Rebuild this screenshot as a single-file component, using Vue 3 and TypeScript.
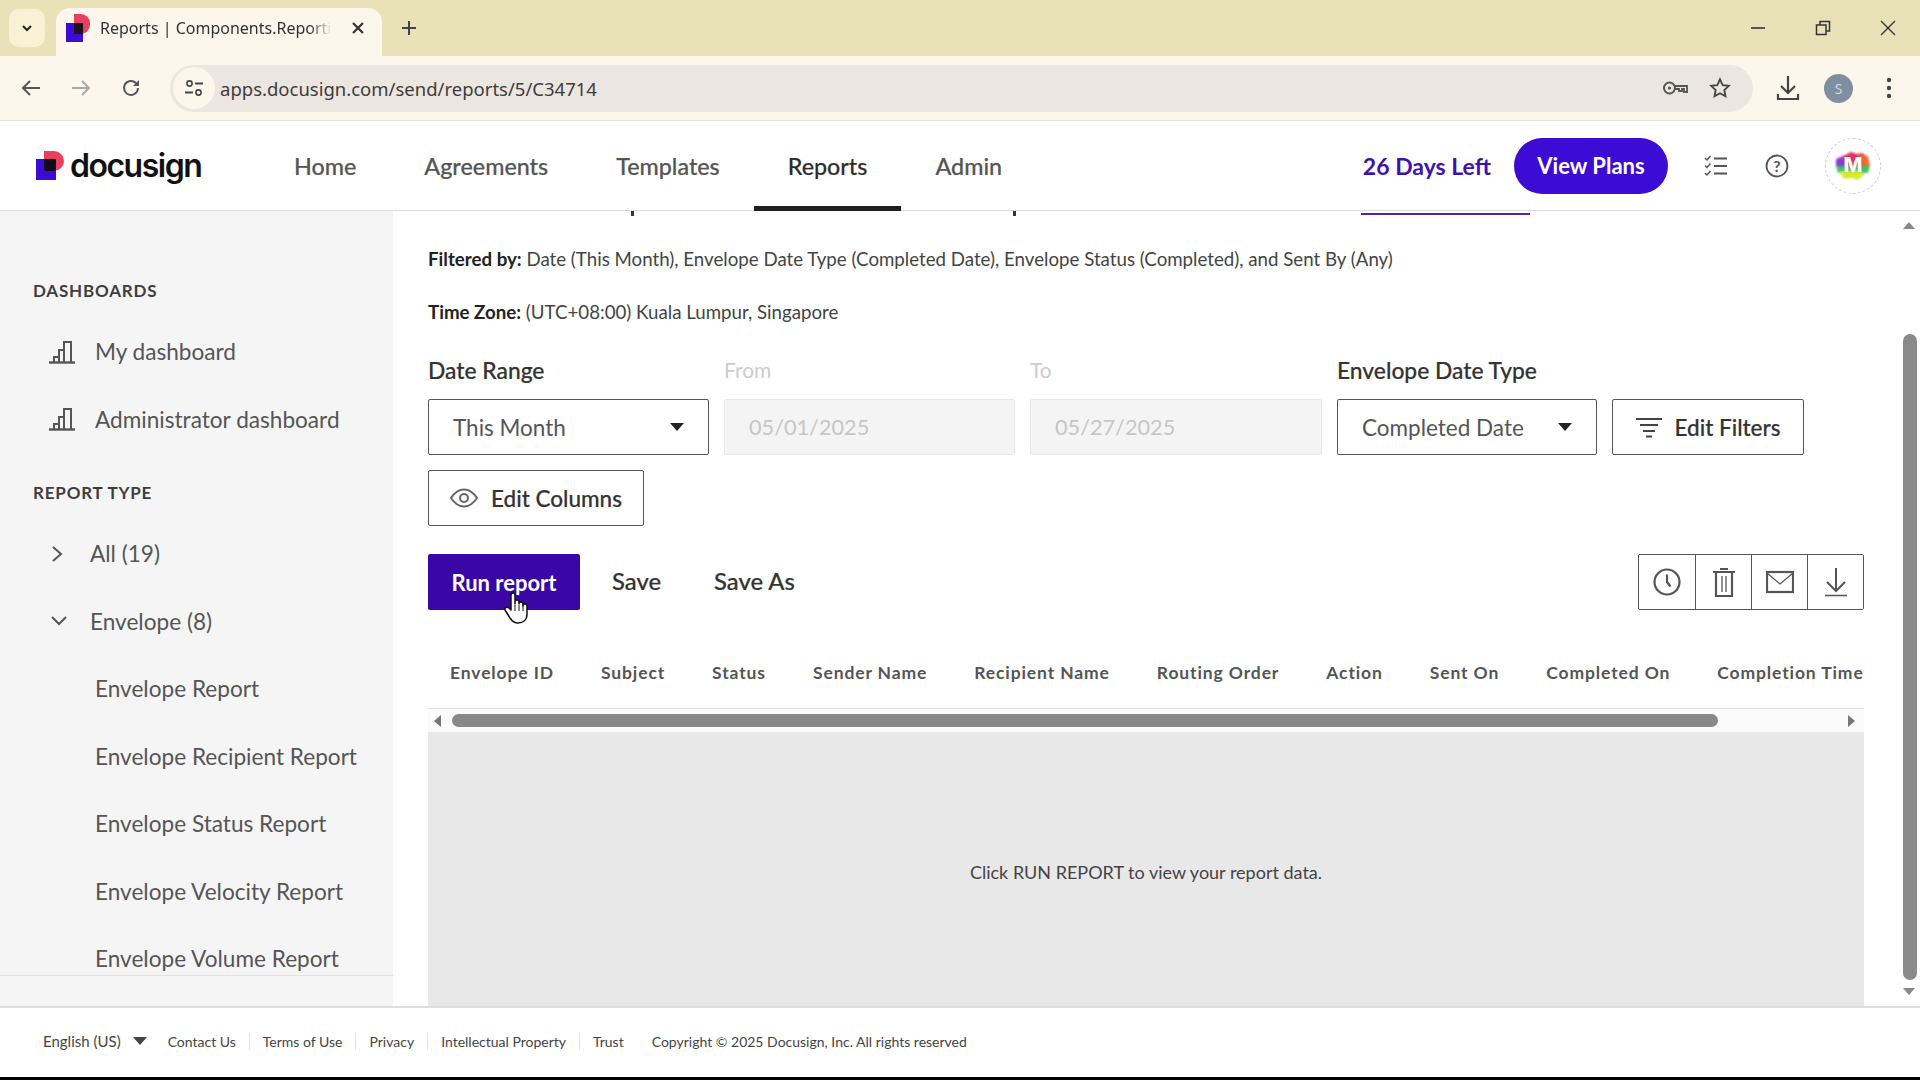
<template>
  <div class="page">
    <div class="tabstrip">
      <button class="tablist">
        <svg width="14" height="14" viewBox="0 0 14 14"><path d="M3 5l4 4 4-4" fill="none" stroke="#222" stroke-width="2" /></svg>
      </button>
      <div class="tab">
        <svg class="favicon" width="24" height="28" viewBox="0 0 24 28">
          <path d="M8 0h7a9 9 0 0 1 9 9v2a9 9 0 0 1-9 9H8z" fill="#e8405f" />
          <rect x="0" y="9" width="17" height="19" fill="#3d0cd4" />
          <rect x="8" y="9" width="9" height="11" fill="#1b1022" />
        </svg>
        <span class="tab-title">Reports | Components.Reporting</span>
        <svg class="tab-x" width="14" height="14" viewBox="0 0 14 14"><path d="M2 2l10 10M12 2L2 12" stroke="#333" stroke-width="2.2" /></svg>
      </div>
      <svg class="newtab" width="16" height="16" viewBox="0 0 16 16"><path d="M8 1v14M1 8h14" stroke="#444" stroke-width="2" /></svg>
      <div class="winctl">
        <svg width="16" height="16" viewBox="0 0 16 16"><path d="M1 8h14" stroke="#333" stroke-width="1.6" /></svg>
        <svg width="16" height="16" viewBox="0 0 16 16"><path d="M1.500 5h9.500v9.500H1.500zM5 5V1.500h9.500V11H11" fill="none" stroke="#333" stroke-width="1.500" /></svg>
        <svg width="16" height="16" viewBox="0 0 16 16"><path d="M1 1l14 14M15 1L1 15" stroke="#333" stroke-width="1.400" /></svg>
      </div>
    </div>

    <div class="toolbar">
      <svg class="tb-back" width="20" height="18" viewBox="0 0 20 18"><path d="M19 9H2M9 2L2 9l7 7" fill="none" stroke="#555" stroke-width="2" /></svg>
      <svg class="tb-fwd" width="20" height="18" viewBox="0 0 20 18"><path d="M1 9h17M11 2l7 7-7 7" fill="none" stroke="#aaa" stroke-width="2" /></svg>
      <svg class="tb-reload" width="20" height="20" viewBox="0 0 20 20"><path d="M17 10a7 7 0 1 1-2-5l2 2" fill="none" stroke="#555" stroke-width="2" /><path d="M18 2v6h-6z" fill="#555" /></svg>
      <div class="omnibox">
        <span class="site-icon">
          <svg width="20" height="20" viewBox="0 0 20 20">
            <circle cx="5.500" cy="5.500" r="2.600" fill="none" stroke="#444" stroke-width="1.600" />
            <path d="M11 5.500h8M1 14.500h8" stroke="#444" stroke-width="1.800" />
            <circle cx="14.500" cy="14.500" r="2.600" fill="none" stroke="#444" stroke-width="1.600" />
          </svg>
        </span>
        <span class="url">apps.docusign.com/send/reports/5/C34714</span>
        <svg class="key" width="26" height="16" viewBox="0 0 26 16">
          <circle cx="7.500" cy="8" r="5.500" fill="none" stroke="#555" stroke-width="2" />
          <circle cx="7.500" cy="8" r="1.600" fill="#555" />
          <path d="M13 6h12v6h-3V9h-2v2h-3V9h-4" fill="none" stroke="#555" stroke-width="1.800" />
        </svg>
        <svg class="star" width="22" height="22" viewBox="0 0 24 24"><path d="M12 2.500l2.900 6.300 6.800.8-5 4.700 1.300 6.800-6-3.400-6 3.400 1.300-6.800-5-4.700 6.800-.8z" fill="none" stroke="#444" stroke-width="2" /></svg>
      </div>
      <svg class="tb-dl" width="24" height="26" viewBox="0 0 24 26"><path d="M12 1v16M5 11l7 7 7-7" fill="none" stroke="#444" stroke-width="2.200" /><path d="M2 19v5h20v-5" fill="none" stroke="#444" stroke-width="2.200" /></svg>
      <span class="profile">S</span>
      <svg class="tb-menu" width="6" height="22" viewBox="0 0 6 22"><circle cx="3" cy="3" r="2.200" fill="#444" /><circle cx="3" cy="11" r="2.200" fill="#444" /><circle cx="3" cy="19" r="2.200" fill="#444" /></svg>
    </div>

    <header class="nav">
      <div class="logo">
        <svg width="28" height="29" viewBox="0 0 28 29">
          <path d="M8 0h10a10 10 0 0 1 0 20H8z" fill="#e8405f" />
          <rect x="0" y="8" width="20" height="21" fill="#3d0cd4" />
          <rect x="8" y="8" width="12" height="12" rx="2" fill="#120c1a" />
        </svg>
        <span class="logo-text">docusign</span>
      </div>
      <nav class="nav-links">
        <a v-for="link in navLinks" :key="link" class="nav-link" :class="{ active: link === 'Reports' }">{{ link }}</a>
      </nav>
      <span class="days">26 Days Left</span>
      <button class="plans">View Plans</button>
      <svg class="nav-check" width="24" height="24" viewBox="0 0 24 24" fill="none" stroke="#555" stroke-width="1.800">
        <path d="M10 4.500h13M10 12h13M10 19.500h13" />
        <path d="M1 4l2 2 3.500-4M1 11.500l2 2 3.500-4M1 19l2 2 3.500-4" stroke-width="1.500" />
      </svg>
      <svg class="nav-help" width="24" height="24" viewBox="0 0 24 24">
        <circle cx="12" cy="12" r="10.500" fill="none" stroke="#555" stroke-width="1.800" />
        <text x="12" y="17.500" text-anchor="middle" class="help-mark">?</text>
      </svg>
      <div class="avatar">
        <svg class="blot" width="34" height="30" viewBox="0 0 34 30">
          <path d="M9 4l6-3 6 2 5-1 6 4 1 9H0l2-8z" fill="#e2305f" />
          <path d="M22 3l10 3 2 9h-8z" fill="#ee6b2e" />
          <path d="M0 8l9-2v10H0z" fill="#8d3ad6" />
          <path d="M0 15h34l-2 7H2z" fill="#3bc26c" />
          <path d="M3 20h22l3 3-6 6-6-2-8 1z" fill="#d5ea2f" />
        </svg>
        <span class="avatar-m">M</span>
      </div>
    </header>

    <div class="body">
      <aside class="sidebar">
        <div class="side-scroll">
          <div class="side-head">DASHBOARDS</div>
          <a v-for="d in dashboards" :key="d" class="side-item dash">
            <svg width="26" height="24" viewBox="0 0 26 24" fill="none" stroke="#555" stroke-width="2.400">
              <path d="M0 22.500h26" />
              <path d="M5 22v-5h5v5M10 22V10h5v12M15 22V2h7v20" stroke-width="2" />
            </svg>
            <span>{{ d }}</span>
          </a>
          <div class="side-head second">REPORT TYPE</div>
          <a class="side-item group">
            <svg width="14" height="18" viewBox="0 0 14 18"><path d="M3 2l8 7-8 7" fill="none" stroke="#555" stroke-width="2" /></svg>
            <span>All (19)</span>
          </a>
          <a class="side-item group">
            <svg width="18" height="12" viewBox="0 0 18 12"><path d="M2 2l7 7 7-7" fill="none" stroke="#555" stroke-width="2" /></svg>
            <span>Envelope (8)</span>
          </a>
          <a v-for="r in envelopeReports" :key="r" class="side-item sub">{{ r }}</a>
        </div>
        <div class="side-end"></div>
      </aside>

      <main class="main">
        <div class="peek">
          <i class="peek-dot first"></i>
          <i class="peek-dot second"></i>
          <i class="peek-line"></i>
        </div>
        <p class="meta"><b>Filtered by:</b> Date (This Month), Envelope Date Type (Completed Date), Envelope Status (Completed), and Sent By (Any)</p>
        <p class="meta zone"><b>Time Zone:</b> (UTC+08:00) Kuala Lumpur, Singapore</p>

        <div class="filters">
          <div class="field w-range">
            <label>Date Range</label>
            <div class="control select">
              <span>This Month</span>
              <i class="caret"></i>
            </div>
          </div>
          <div class="field w-from">
            <label class="off">From</label>
            <div class="control disabled">05/01/2025</div>
          </div>
          <div class="field w-to">
            <label class="off">To</label>
            <div class="control disabled">05/27/2025</div>
          </div>
          <div class="field w-type">
            <label>Envelope Date Type</label>
            <div class="control select">
              <span>Completed Date</span>
              <i class="caret"></i>
            </div>
          </div>
          <button class="outline w-filters">
            <svg width="26" height="22" viewBox="0 0 26 22" fill="none" stroke="#444" stroke-width="2">
              <path d="M0 3h26M4 9h18M7 15h12M10 20.500h6" />
            </svg>
            Edit Filters
          </button>
          <button class="outline w-cols">
            <svg width="28" height="20" viewBox="0 0 28 20" fill="none" stroke="#666" stroke-width="2">
              <path d="M1 10c4-6 8-8.500 13-8.500S23 4 27 10c-4 6-8 8.500-13 8.500S5 16 1 10z" />
              <circle cx="14" cy="10" r="4" />
            </svg>
            Edit Columns
          </button>
        </div>

        <div class="actions">
          <button class="run">
            Run report
            <svg class="hand" width="26" height="34" viewBox="0 0 26 34">
              <path d="M8 19V4a2 2 0 0 1 4 0v9l0-2a2 2 0 0 1 4 0v2a2 2 0 0 1 4 0v2a2 2 0 0 1 4 0v8c0 6-4 9-9 9-4 0-6-2-8-5l-5-8c-1-2 2-4 4-2z" fill="#fff" stroke="#111" stroke-width="1.500" stroke-linejoin="round" />
              <path d="M12 14v6M16 14v6M20 15v5" stroke="#111" stroke-width="1" />
            </svg>
          </button>
          <a class="plain save">Save</a>
          <a class="plain save-as">Save As</a>
          <div class="icon-group">
            <button>
              <svg width="28" height="28" viewBox="0 0 28 28" fill="none" stroke="#555" stroke-width="2.200">
                <circle cx="14" cy="14" r="12.500" /><path d="M14 6.500V14l3.500 4.500" />
              </svg>
            </button>
            <button>
              <svg width="24" height="30" viewBox="0 0 24 30" fill="none" stroke="#555" stroke-width="2.200">
                <path d="M1 5h22M8 2h8M4 5v24h16V5" /><path d="M10 9v16M14 9v16" stroke-width="1.300" />
              </svg>
            </button>
            <button>
              <svg width="28" height="24" viewBox="0 0 28 24" fill="none" stroke="#555" stroke-width="2.200">
                <rect x="1" y="2" width="26" height="20" /><path d="M1 3l13 11L27 3" stroke-width="1.300" />
              </svg>
            </button>
            <button>
              <svg width="24" height="30" viewBox="0 0 24 30" fill="none" stroke="#555" stroke-width="2">
                <path d="M12 1v23M3 15l9 9 9-9" /><path d="M1 28.500h22" stroke-width="1.500" />
              </svg>
            </button>
          </div>
        </div>

        <div class="thead">
          <span v-for="c in columns" :key="c">{{ c }}</span>
        </div>
        <div class="hscroll">
          <i class="arrow left"></i>
          <i class="thumb"></i>
          <i class="arrow right"></i>
        </div>
        <div class="empty">Click RUN REPORT to view your report data.</div>

        <div class="vscroll">
          <i class="v-arrow up"></i>
          <i class="v-thumb"></i>
          <i class="v-arrow down"></i>
        </div>
      </main>
    </div>

    <footer class="footer">
      <span class="lang">English (US)<i class="foot-caret"></i></span>
      <a v-for="f in footerLinks" :key="f" class="foot-link">{{ f }}</a>
      <span class="copy">Copyright © 2025 Docusign, Inc. All rights reserved</span>
    </footer>
    <div class="blackbar"></div>
  </div>
</template>

<script setup lang="ts">
const navLinks = ['Home', 'Agreements', 'Templates', 'Reports', 'Admin'];
const dashboards = ['My dashboard', 'Administrator dashboard'];
const envelopeReports = [
  'Envelope Report',
  'Envelope Recipient Report',
  'Envelope Status Report',
  'Envelope Velocity Report',
  'Envelope Volume Report',
];
const columns = [
  'Envelope ID',
  'Subject',
  'Status',
  'Sender Name',
  'Recipient Name',
  'Routing Order',
  'Action',
  'Sent On',
  'Completed On',
  'Completion Time',
];
const footerLinks = ['Contact Us', 'Terms of Use', 'Privacy', 'Intellectual Property', 'Trust'];
</script>

<style>
html,
body {
  margin: 0;
  background: #fff;
}
</style>

<style scoped>
.page {
  width: 1920px;
  height: 1080px;
  overflow: hidden;
  display: flex;
  flex-direction: column;
  font-family: Lato, "Noto Sans", sans-serif;
  color: #333;
}
button {
  font-family: inherit;
  cursor: pointer;
}

/* browser chrome */
.tabstrip {
  height: 56px;
  flex: none;
  display: flex;
  align-items: flex-end;
  background: #e9e2b9;
}
.tablist {
  width: 36px;
  height: 38px;
  margin: 0 11px 9px 9px;
  border: 0;
  border-radius: 10px;
  background: #f8f1d3;
  display: flex;
  align-items: center;
  justify-content: center;
}
.tab {
  width: 326px;
  height: 48px;
  border-radius: 14px 14px 0 0;
  background: #fcf6ec;
  display: flex;
  align-items: center;
  padding: 0 0 8px 10px;
  box-sizing: border-box;
}
.favicon {
  flex: none;
  margin-right: 10px;
}
.tab-title {
  width: 232px;
  font: 16px "Noto Sans", sans-serif;
  color: #333;
  white-space: nowrap;
  overflow: hidden;
  -webkit-mask-image: linear-gradient(90deg, #000 90%, transparent);
  mask-image: linear-gradient(90deg, #000 90%, transparent);
}
.tab-x {
  margin-left: 19px;
}
.newtab {
  margin: 0 0 20px 19px;
}
.winctl {
  margin-left: auto;
  margin-right: 24px;
  display: flex;
  gap: 49px;
  padding-bottom: 20px;
}

.toolbar {
  height: 65px;
  flex: none;
  display: flex;
  align-items: center;
  background: #fcf6ec;
  border-bottom: 1px solid #e8e3da;
  box-sizing: border-box;
}
.tb-back {
  margin-left: 21px;
}
.tb-fwd {
  margin-left: 30px;
}
.tb-reload {
  margin-left: 30px;
}
.omnibox {
  margin-left: 29px;
  width: 1583px;
  height: 47px;
  border-radius: 24px;
  background: #ece6e0;
  display: flex;
  align-items: center;
}
.site-icon {
  width: 42px;
  height: 42px;
  margin-left: 3px;
  border-radius: 50%;
  background: #fcf6ec;
  display: flex;
  align-items: center;
  justify-content: center;
}
.url {
  margin-left: 5px;
  font: 18.500px "Noto Sans", sans-serif;
  color: #3c3c3c;
}
.key {
  margin-left: auto;
}
.star {
  margin: 0 22px 0 21px;
}
.tb-dl {
  margin-left: 23px;
}
.profile {
  margin-left: 24px;
  width: 29px;
  height: 29px;
  border-radius: 50%;
  background: #7f8ea0;
  color: #ccd6e0;
  font: 14px "Noto Sans", sans-serif;
  display: flex;
  align-items: center;
  justify-content: center;
}
.tb-menu {
  margin-left: 33px;
}

/* app nav */
.nav {
  height: 90px;
  flex: none;
  box-sizing: border-box;
  display: flex;
  align-items: center;
  background: #fff;
  border-bottom: 1px solid #dcdbe0;
  position: relative;
  z-index: 2;
}
.logo {
  width: 260px;
  padding-left: 36px;
  box-sizing: border-box;
  display: flex;
  align-items: center;
  gap: 6px;
}
.logo-text {
  font: 600 32px Inter, sans-serif;
  letter-spacing: -1.500px;
  color: #111;
}
.nav-links {
  display: flex;
  align-self: stretch;
}
.nav-link {
  padding: 0 34px;
  display: flex;
  align-items: center;
  font-size: 23.300px;
  font-weight: 500;
  color: #555;
  -webkit-text-stroke: 0.2px #555;
  border-bottom: 5px solid transparent;
  border-top: 5px solid transparent;
  margin-bottom: -1px;
}
.nav-link.active {
  color: #2b2b2b;
  border-bottom-color: #1f1f1f;
}
.days {
  margin-left: auto;
  font-size: 23px;
  font-weight: 700;
  color: #3d12b5;
}
.plans {
  margin-left: 23px;
  width: 154px;
  height: 56px;
  border: 0;
  border-radius: 28px;
  background: #3d0cd4;
  color: #fff;
  font-size: 22px;
  font-weight: 700;
}
.nav-check {
  margin-left: 36px;
}
.nav-help {
  margin-left: 37px;
}
.help-mark {
  font: 700 16px Lato, sans-serif;
  fill: #555;
}
.avatar {
  margin: 0 39px 0 36px;
  width: 56px;
  height: 56px;
  box-sizing: border-box;
  border-radius: 50%;
  border: 1px dashed #ccc;
  display: flex;
  align-items: center;
  justify-content: center;
  position: relative;
}
.blot {
  filter: blur(0.8px);
}
.avatar-m {
  position: absolute;
  left: 0;
  right: 0;
  top: 14px;
  text-align: center;
  font: 800 20px Inter, sans-serif;
  color: #fff;
}

/* layout */
.body {
  flex: 1;
  min-height: 0;
  display: flex;
}
.sidebar {
  width: 393px;
  flex: none;
  display: flex;
  flex-direction: column;
  background: #f6f5f6;
}
.side-scroll {
  flex: 1;
  min-height: 0;
  overflow: hidden;
  padding-top: 66px;
  border-bottom: 1px solid #e1e1e1;
}
.side-end {
  height: 30px;
  flex: none;
}
.side-head {
  height: 28px;
  line-height: 28px;
  margin: 0 0 13px 33px;
  font-size: 17px;
  font-weight: 700;
  letter-spacing: 0.800px;
  color: #3e3e3e;
}
.side-head.second {
  margin-top: 26px;
  margin-bottom: 13px;
}
.side-item {
  height: 67.500px;
  display: flex;
  align-items: center;
  font-size: 22.600px;
  color: #555;
}
.dash {
  padding-left: 49px;
  gap: 20px;
}
.group {
  position: relative;
  padding-left: 90px;
}
.group svg {
  position: absolute;
  left: 50px;
}
.sub {
  padding-left: 95px;
}

.main {
  flex: 1;
  min-width: 0;
  position: relative;
  background: #fff;
  padding: 0 56px 0 35px;
  display: flex;
  flex-direction: column;
}
.peek {
  height: 5px;
  flex: none;
  position: relative;
}
.peek-dot {
  position: absolute;
  top: 0;
  width: 3px;
  height: 5px;
  background: #333;
}
.peek-dot.first {
  left: 203px;
}
.peek-dot.second {
  left: 585px;
}
.peek-line {
  position: absolute;
  top: 2px;
  left: 933px;
  width: 169px;
  height: 2px;
  background: #4a22c0;
}
.meta {
  margin: 31px 0 0;
  font-size: 18.700px;
  line-height: 24px;
  color: #444;
  white-space: nowrap;
}
.meta b {
  color: #222;
}
.meta.zone {
  margin-top: 29px;
}
.filters {
  margin-top: 33px;
  display: flex;
  flex-wrap: wrap;
  align-items: flex-end;
  gap: 15px;
}
.field label {
  display: block;
  height: 26px;
  line-height: 26px;
  margin-bottom: 16px;
  font-size: 22.800px;
  font-weight: 500;
  color: #333;
  -webkit-text-stroke: 0.2px #333;
}
.field label.off {
  color: #ccc;
  font-weight: 400;
  font-size: 21px;
  -webkit-text-stroke: 0;
}
.control {
  height: 56px;
  box-sizing: border-box;
  border: 1px solid #555;
  border-radius: 2px;
  padding: 0 24px;
  display: flex;
  align-items: center;
  font-size: 22.500px;
  color: #555;
}
.select {
  justify-content: space-between;
  padding-right: 24px;
}
.disabled {
  border-color: #e8e8e8;
  background: #f4f4f4;
  color: #c6c6c6;
  font-size: 21.700px;
}
.caret {
  width: 0;
  height: 0;
  border-left: 7px solid transparent;
  border-right: 7px solid transparent;
  border-top: 8px solid #222;
}
.w-range {
  width: 281px;
}
.w-from {
  width: 291px;
}
.w-to {
  width: 292px;
}
.w-type {
  width: 260px;
}
.outline {
  height: 56px;
  box-sizing: border-box;
  border: 1px solid #555;
  border-radius: 2px;
  background: #fff;
  display: flex;
  align-items: center;
  justify-content: center;
  font-size: 22.500px;
  font-weight: 500;
  color: #333;
  -webkit-text-stroke: 0.2px #333;
}
.w-filters {
  width: 192px;
  gap: 13px;
}
.w-cols {
  width: 216px;
  gap: 13px;
}
.actions {
  margin-top: 28px;
  display: flex;
  align-items: center;
}
.run {
  position: relative;
  width: 152px;
  height: 56px;
  border: 0;
  border-radius: 2px;
  background: #3a07a6;
  color: #fff;
  font-size: 22px;
  font-weight: 700;
}
.hand {
  position: absolute;
  left: 75px;
  top: 37px;
}
.plain {
  font-size: 23.800px;
  font-weight: 500;
  color: #333;
  -webkit-text-stroke: 0.2px #333;
  margin-top: -2px;
}
.save {
  margin-left: 32px;
}
.save-as {
  margin-left: 53px;
}
.icon-group {
  margin-left: auto;
  display: flex;
  height: 56px;
  border: 1px solid #555;
  border-radius: 2px;
  box-sizing: border-box;
}
.icon-group button {
  width: 56px;
  border: 0;
  border-left: 1px solid #555;
  background: #fff;
  display: flex;
  align-items: center;
  justify-content: center;
  padding: 0;
}
.icon-group button:first-child {
  border-left: 0;
}
.thead {
  margin-top: 27px;
  height: 72px;
  flex: none;
  box-sizing: border-box;
  border-bottom: 1px solid #dedede;
  padding-left: 22px;
  display: flex;
  align-items: center;
  gap: 47px;
  overflow: hidden;
  white-space: nowrap;
  font-size: 17.500px;
  font-weight: 700;
  letter-spacing: 0.880px;
  color: #555;
}
.hscroll {
  height: 23px;
  flex: none;
  display: flex;
  align-items: center;
  background: #fbfbfb;
  padding: 0 6px;
}
.thumb {
  width: 1266px;
  height: 13px;
  margin-left: 11px;
  border-radius: 7px;
  background: #888;
}
.arrow {
  width: 0;
  height: 0;
  border-top: 6px solid transparent;
  border-bottom: 6px solid transparent;
}
.arrow.left {
  border-right: 7px solid #777;
}
.arrow.right {
  margin-left: auto;
  margin-right: 3px;
  border-left: 7px solid #777;
}
.empty {
  flex: 1;
  min-height: 0;
  background: #e8e8e8;
  display: flex;
  align-items: center;
  justify-content: center;
  font-size: 18px;
  color: #444;
  padding-top: 5px;
}
.vscroll {
  position: absolute;
  top: 0;
  bottom: 0;
  right: 0;
  width: 21px;
  background: #fff;
}
.v-thumb {
  position: absolute;
  top: 123px;
  left: 4px;
  width: 14px;
  height: 646px;
  border-radius: 7px;
  background: #8a8a8a;
}
.v-arrow {
  position: absolute;
  left: 4px;
  width: 0;
  height: 0;
  border-left: 6px solid transparent;
  border-right: 6px solid transparent;
}
.v-arrow.up {
  top: 11px;
  border-bottom: 7px solid #888;
}
.v-arrow.down {
  top: 777px;
  border-top: 7px solid #888;
}

/* footer */
.footer {
  height: 71px;
  flex: none;
  box-sizing: border-box;
  border-top: 2px solid #dedede;
  background: #fff;
  padding: 0 0 3px 43px;
  display: flex;
  align-items: center;
  font-size: 14px;
  color: #444;
}
.lang {
  display: flex;
  align-items: center;
  font-size: 15px;
  margin-right: 8px;
}
.foot-caret {
  margin-left: 12px;
  width: 0;
  height: 0;
  border-left: 7px solid transparent;
  border-right: 7px solid transparent;
  border-top: 8px solid #444;
}
.foot-link {
  padding: 0 13px;
  border-right: 1px solid #e2e2e2;
}
.foot-link:last-of-type {
  border-right: 0;
}
.copy {
  margin-left: 15px;
}
.blackbar {
  height: 3px;
  flex: none;
  background: #000;
}
</style>
